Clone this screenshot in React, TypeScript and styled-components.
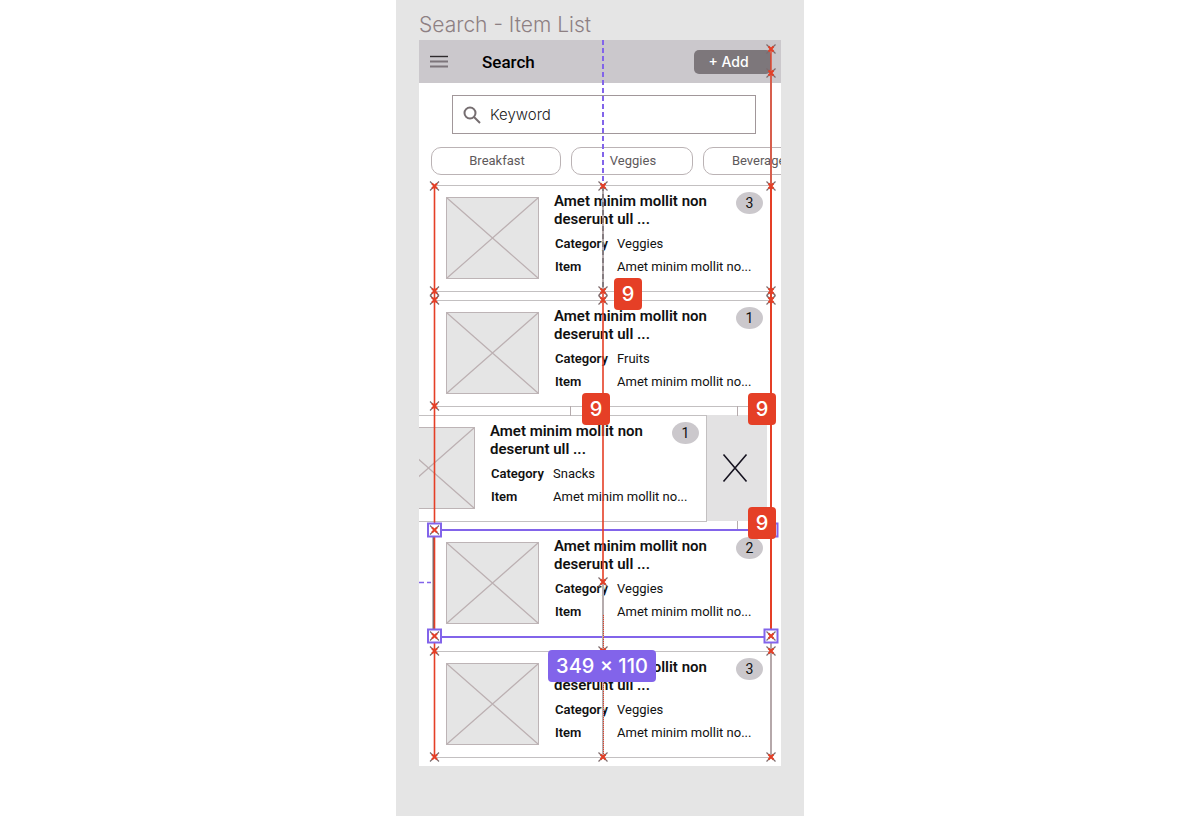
import React from "react";
import styled, { createGlobalStyle, css } from "styled-components";

const GlobalStyle = createGlobalStyle`
  *, *::before, *::after { box-sizing: border-box; }
  body { margin: 0; background: #fff; font-family: Roboto, "Liberation Sans", sans-serif; color: #111; }
  h1, h2, h3, dl, dd, dt, ul { margin: 0; padding: 0; }
  ul { list-style: none; }
  button, input { font: inherit; }
`;

const RED = "#e53f26";
const PURPLE = "#8264ea";
const GREY = "#cbc8cc";
const LINE = "#c3c0c1";

const Canvas = styled.main`
  width: 100%;
  max-width: 408px;
  min-height: 100vh;
  margin: 0 auto;
  padding: 10px 23px 0;
  background: #e5e5e5;
`;

const FrameName = styled.h1`
  height: 30px;
  font: 300 21px/30px Inter, sans-serif;
  color: #8d8083;
  white-space: nowrap;
`;

const Frame = styled.section`
  position: relative;
  width: 100%;
  padding-bottom: 8px;
  background: #fff;
  overflow: hidden;
`;

const Header = styled.header`
  display: flex;
  align-items: center;
  height: 43px;
  padding: 0 10px 0 11px;
  background: ${GREY};
`;

const MenuButton = styled.button`
  display: flex;
  width: 52px;
  padding: 0;
  border: 0;
  background: none;
`;

const ScreenTitle = styled.h2`
  flex: 1;
  font-size: 17px;
  font-weight: 500;
  line-height: 24px;
  color: #000;
`;

const AddButton = styled.button`
  width: 77px;
  height: 24px;
  padding: 0 8px 0 0;
  border: 0;
  border-radius: 5px;
  background: #7d777b;
  color: #fff;
  font: 500 14px/24px Inter, sans-serif;
`;

const SearchBox = styled.label`
  display: flex;
  align-items: center;
  height: 39px;
  margin: 12px 25px 13px 33px;
  padding-left: 10px;
  border: 1px solid #a1979a;
`;

const SearchInput = styled.input`
  flex: 1;
  min-width: 0;
  margin-left: 9px;
  padding: 0;
  border: 0;
  outline: 0;
  background: none;
  font: 300 15px/20px Inter, sans-serif;
  &::placeholder { color: #222; opacity: 1; }
`;

const Chips = styled.nav`
  display: flex;
  gap: 10px;
  padding-left: 12px;
  margin-bottom: 10px;
`;

const Chip = styled.button<{ $width: number }>`
  flex: none;
  width: ${(p) => p.$width}px;
  height: 28px;
  padding: 0 0 0 2px;
  border: 1px solid #bbb3b5;
  border-radius: 10px;
  background: #fff;
  color: #5e595b;
  font-size: 13px;
  line-height: 24px;
`;

const List = styled.ul`
  display: flex;
  flex-direction: column;
  gap: 8px;
  padding: 0 10px 0 15px;
`;

const Row = styled.li<{ $swiped?: boolean; $last?: boolean }>`
  display: flex;
  ${(p) => p.$swiped && css`
    margin: 0 4px 0 -64px;
  `}
  ${(p) => p.$last && css`
    margin-top: 6px;
  `}
`;

const Card = styled.article<{ $selected?: boolean }>`
  flex: 1;
  min-width: 0;
  display: flex;
  height: 107px;
  padding: 6px 7px 0 11px;
  border: 1px solid ${LINE};
  ${(p) => p.$selected && css`
    border-color: ${PURPLE};
    box-shadow: 0 0 0 1px ${PURPLE};
  `}
`;

const Thumb = styled.svg`
  flex: none;
  width: 93px;
  height: 82px;
  margin-top: 5px;
  background: #e5e5e5;
`;

const Info = styled.div`
  flex: 1;
  min-width: 0;
  padding-left: 15px;
`;

const CardTitle = styled.h3`
  width: 160px;
  font-size: 15px;
  font-weight: 600;
  line-height: 18px;
`;

const Fields = styled.dl`
  display: grid;
  grid-template-columns: 62px 1fr;
  margin: 4px 0 0 1px;
  font-size: 13px;
  line-height: 23px;
  white-space: nowrap;
  dt { font-weight: 600; }
`;

const Count = styled.span`
  flex: none;
  width: 27px;
  height: 22px;
  margin-left: -27px;
  border-radius: 50%;
  background: ${GREY};
  font-size: 14px;
  line-height: 22px;
  text-align: center;
`;

const DeleteButton = styled.button`
  display: flex;
  align-items: center;
  justify-content: center;
  width: 60px;
  height: 106px;
  padding: 0 4px 0 0;
  border: 0;
  background: #e3e2e3;
`;

const Guides = styled.svg`
  position: absolute;
  top: 0;
  left: 0;
  width: 362px;
  height: 726px;
  pointer-events: none;
`;

const Tag = styled.span<{ $x: number; $y: number; $size?: boolean }>`
  position: absolute;
  left: ${(p) => p.$x}px;
  top: ${(p) => p.$y}px;
  width: ${(p) => (p.$size ? 108 : 28)}px;
  height: 32px;
  border-radius: 4px;
  background: ${(p) => (p.$size ? PURPLE : RED)};
  color: #fff;
  font: 500 20px/32px Inter, sans-serif;
  text-align: center;
  white-space: nowrap;
`;

type Item = { category: string; count: number; state?: "swiped" | "selected" | "last" };

const items: Item[] = [
  { category: "Veggies", count: 3 },
  { category: "Fruits", count: 1 },
  { category: "Snacks", count: 1, state: "swiped" },
  { category: "Veggies", count: 2, state: "selected" },
  { category: "Veggies", count: 3, state: "last" },
];

function ItemRow({ category, count, state }: Item) {
  return (
    <Row $swiped={state === "swiped"} $last={state === "last"}>
      <Card $selected={state === "selected"}>
        <Thumb viewBox="0 0 93 82" aria-hidden="true">
          <path d="M1 1 92 81M92 1 1 81" stroke="#bcb0b2" strokeWidth="1.2" fill="none" />
          <rect x="0.5" y="0.5" width="92" height="81" stroke="#bdb4b6" fill="none" />
        </Thumb>
        <Info>
          <CardTitle>Amet minim mollit non deserunt ull ...</CardTitle>
          <Fields>
            <dt>Category</dt>
            <dd>{category}</dd>
            <dt>Item</dt>
            <dd>Amet minim mollit no...</dd>
          </Fields>
        </Info>
        <Count>{count}</Count>
      </Card>
      {state === "swiped" && (
        <DeleteButton aria-label="Delete">
          <svg width="26" height="30" viewBox="0 0 26 30" fill="none" stroke="#161320" strokeWidth="1.6">
            <path d="M1.500 1.500 24.500 28.500M24.500 1.500 1.500 28.500" />
          </svg>
        </DeleteButton>
      )}
    </Row>
  );
}

function Cross({ x, y }: { x: number; y: number }) {
  return (
    <g>
      <path d={`M${x - 4.5} ${y - 4.5}l9 9M${x + 4.5} ${y - 4.5}l-9 9`} stroke="#7d6b6c" strokeWidth="1.2" />
      <path d={`M${x - 2.5} ${y - 2.5}l5 5M${x + 2.5} ${y - 2.5}l-5 5`} stroke={RED} strokeWidth="2" />
    </g>
  );
}

const LEFT = 15.5;
const MIDDLE = 184;
const RIGHT = 352;

const crosses: Record<number, number[]> = {
  [LEFT]: [146, 251, 260, 366, 490, 596, 611, 717],
  [MIDDLE]: [146, 251, 260, 542, 611, 717],
  [RIGHT]: [9, 33, 146, 251, 260, 596, 611, 717],
};

function MeasureGuides() {
  return (
    <Guides viewBox="0 0 362 726" fill="none" aria-hidden="true">
      <path d="M151.500 366v10M318.500 366v10M318.500 481v8" stroke="#b5abad" />
      <path d="M0 542.500h12" stroke={PURPLE} strokeWidth="1.500" strokeDasharray="5 3" />
      <path d={`M${MIDDLE} 0V146`} stroke={PURPLE} strokeWidth="2" strokeDasharray="5 3" />
      <path d={`M${MIDDLE} 146V251M${MIDDLE} 542V717`} stroke="#b5abad" strokeWidth="2" />
      <path d={`M${MIDDLE} 146V251`} stroke="#756d72" strokeWidth="1.500" strokeDasharray="5 3" />
      <path d={`M${MIDDLE} 251V542`} stroke={RED} strokeWidth="1.600" />
      <path d={`M${MIDDLE + 0.5} 575V717`} stroke={RED} strokeDasharray="1 1" />
      <path d="M14.500 490V596" stroke="#756d72" strokeWidth="2" />
      <path d={`M${LEFT} 146V717`} stroke={RED} strokeWidth="1.600" />
      <path d={`M${RIGHT} 33V146M${RIGHT} 596V717`} stroke="#b5a8aa" strokeWidth="2" />
      <path d={`M${RIGHT} 9V146`} stroke={RED} strokeWidth="1.400" />
      <path d={`M${RIGHT} 146V596`} stroke={RED} strokeWidth="2" />
      {[[15.5, 490], [15.5, 596], [352, 490], [352, 596]].map(([x, y]) => (
        <rect key={`${x}-${y}`} x={x - 6.5} y={y - 6.5} width="13" height="13" fill="#fff" stroke={PURPLE} strokeWidth="2" />
      ))}
      {[LEFT, MIDDLE, RIGHT].map((x) => (
        <g key={x}>
          <ellipse cx={x} cy="255.500" rx="3.500" ry="3.500" stroke="#a16c68" />
          {crosses[x].map((y) => <Cross key={y} x={x} y={y} />)}
        </g>
      ))}
    </Guides>
  );
}

export default function App() {
  return (
    <>
      <GlobalStyle />
      <Canvas>
        <FrameName>Search - Item List</FrameName>
        <Frame>
          <Header>
            <MenuButton aria-label="Menu">
              <svg width="18" height="13" viewBox="0 0 18 13" fill="none">
                <path d="M0 1.500h18" stroke="#2f2b2d" strokeWidth="1.400" />
                <path d="M0 6.500h18M0 11.500h18" stroke="#7d757a" strokeWidth="2" />
              </svg>
            </MenuButton>
            <ScreenTitle>Search</ScreenTitle>
            <AddButton>+ Add</AddButton>
          </Header>
          <SearchBox>
            <svg width="18" height="18" viewBox="0 0 18 18" fill="none" stroke="#756d70" strokeWidth="2">
              <circle cx="7" cy="7" r="5.500" />
              <path d="m11 11 6 6" />
            </svg>
            <SearchInput type="search" aria-label="Keyword" placeholder="Keyword" />
          </SearchBox>
          <Chips>
            <Chip $width={130}>Breakfast</Chip>
            <Chip $width={122}>Veggies</Chip>
            <Chip $width={116}>Beverages</Chip>
          </Chips>
          <List>
            {items.map((item, i) => <ItemRow key={i} {...item} />)}
          </List>
          <MeasureGuides />
          <Tag $x={195} $y={238}>9</Tag>
          <Tag $x={163} $y={353}>9</Tag>
          <Tag $x={329} $y={353}>9</Tag>
          <Tag $x={329} $y={467}>9</Tag>
          <Tag $size $x={129} $y={610}>349 × 110</Tag>
        </Frame>
      </Canvas>
    </>
  );
}
